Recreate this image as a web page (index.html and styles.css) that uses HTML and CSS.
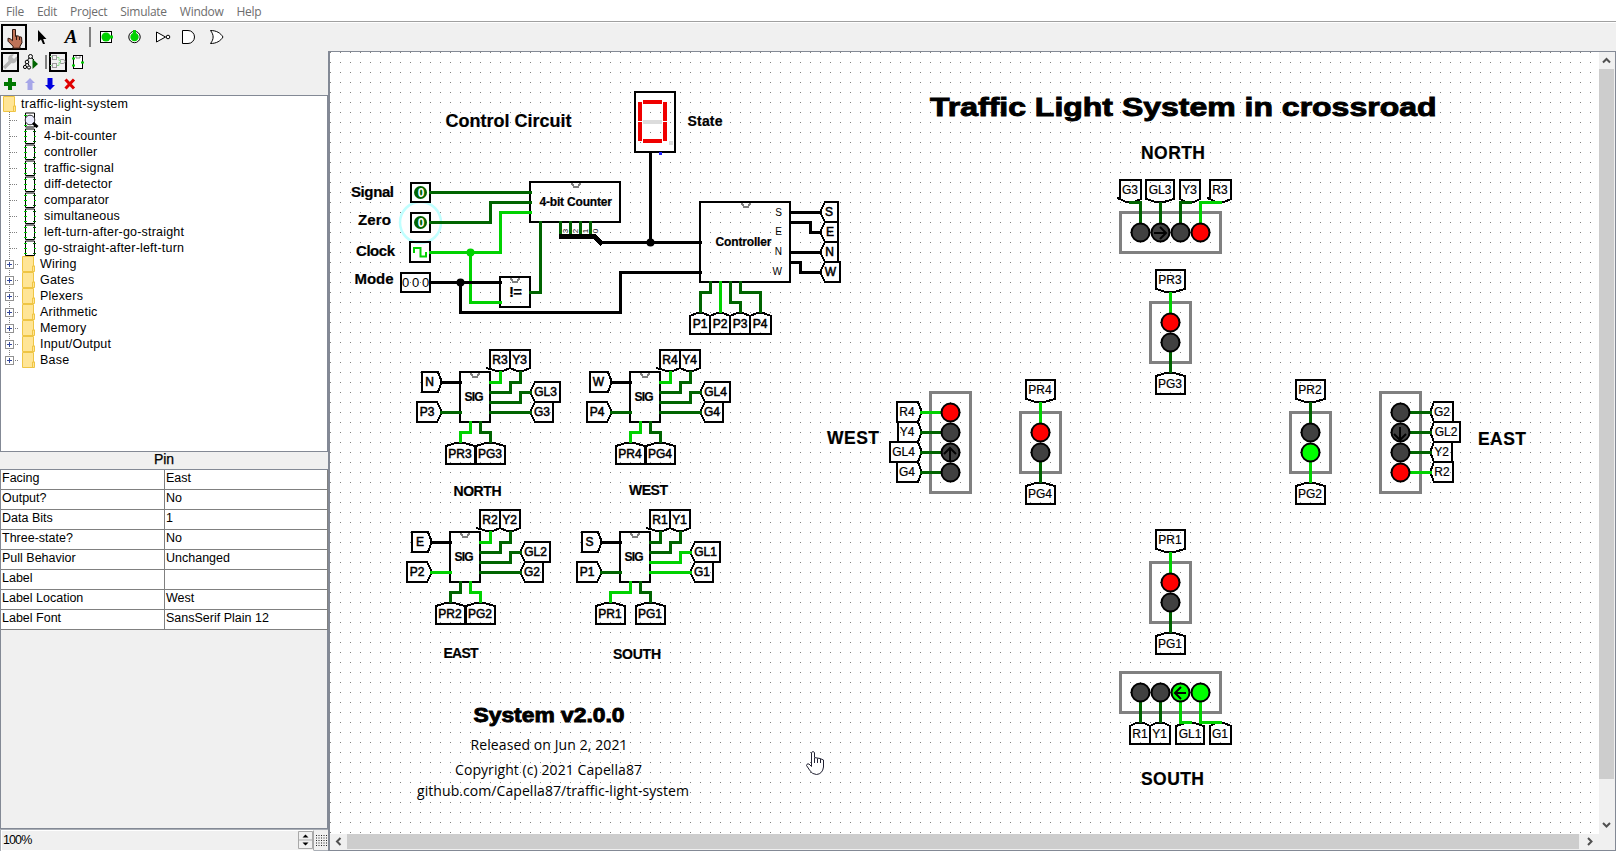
FILE: index.html
```html
<!DOCTYPE html>
<html lang="en">
<head>
<meta charset="utf-8">
<title>traffic-light-system</title>
<link rel="stylesheet" href="styles.css">
</head>
<body>
<svg class="defs" width="0" height="0" aria-hidden="true">
  <defs>
    <symbol id="branch" viewBox="0 0 18 16"><path class="dotted" d="M9.500 0V16M10 8.500H18"/></symbol>
    <symbol id="expand" viewBox="0 0 22 16"><path class="dotted" d="M9.500 0V16M15 8.500H19"/><rect x="5.500" y="4.500" width="8" height="8" fill="#fff" stroke="#919191"/><path d="M7 8.500H12M9.500 6V11" stroke="#33479b" fill="none"/></symbol>
    <symbol id="expandlast" viewBox="0 0 22 16"><path class="dotted" d="M9.500 0V5M15 8.500H19"/><rect x="5.500" y="4.500" width="8" height="8" fill="#fff" stroke="#919191"/><path d="M7 8.500H12M9.500 6V11" stroke="#33479b" fill="none"/></symbol>
    <symbol id="folder" viewBox="0 0 14 16"><path d="M.5 .5H11.500V10H12.500V15.500H.5Z" fill="#ffe596" stroke="#efc544"/><path d="M10.500 15V10H12.500" fill="none" stroke="#efc544"/></symbol>
    <symbol id="chip" viewBox="0 0 12 16"><path d="M1.500 1V15.500H10.500V1Z" fill="#fff" stroke="#000"/><path d="M0 3.500H3M0 8.500H3M0 13.500H3M10 8.500H12" stroke="#00d200"/><path d="M9 3.500H12M9 13.500H12" stroke="#006400"/></symbol>
    <symbol id="chipmain" viewBox="0 0 15 16"><path d="M1.500 1V15H10.500V1Z" fill="#fff" stroke="#000"/><path d="M0 3.500H3M0 13.500H3" stroke="#00d200"/><circle cx="6" cy="8" r="4.800" fill="#ececff" stroke="#333"/><path d="M9 11L13.500 15" stroke="#000" stroke-width="3"/></symbol>
  </defs>
</svg>
<div class="app">
  <nav class="menubar"><span>File</span><span>Edit</span><span>Project</span><span>Simulate</span><span>Window</span><span>Help</span></nav>
  <div class="toolbar">
    <span class="tool selected"><svg width="28" height="28" viewBox="0 0 28 28"><path d="M12.500 6.500h3v7l1-.8 2 .4 1 .6 2 .5.500 5.500-2 3.500v2h-7v-2l-5-5v-3l2 .5 2.500 2z" fill="#bf7358" stroke="#2e1710"/><path d="M16.500 13v4M19.500 14v3" stroke="#2e1710"/></svg></span>
    <span class="tool"><svg width="28" height="28" viewBox="0 0 28 28"><path d="M10 7V19L13 16.500L15 21H17L15.200 16H18.500Z"/></svg></span>
    <span class="tool letter">A</span>
    <i class="sep"></i>
    <span class="tool add"><svg width="27" height="28" viewBox="0 0 27 28"><rect x="7.500" y="8.500" width="11" height="11" fill="#fff" stroke="#000"/><circle cx="13" cy="14" r="4.500" fill="#00d200"/><path d="M17 14H20" stroke="#00d200" stroke-width="3"/></svg></span>
    <span class="tool add"><svg width="27" height="28" viewBox="0 0 27 28"><circle cx="13.500" cy="14" r="5.700" fill="#fff" stroke="#000"/><circle cx="13.500" cy="14" r="4.200" fill="#00d200"/><path d="M13.500 7V11" stroke="#00d200" stroke-width="3"/></svg></span>
    <span class="tool add"><svg width="27" height="28" viewBox="0 0 27 28"><path d="M8.500 9V19L17.500 14Z" fill="#fff" stroke="#000"/><circle cx="20" cy="14" r="1.800" fill="#fff" stroke="#000"/></svg></span>
    <span class="tool add"><svg width="27" height="28" viewBox="0 0 27 28"><path d="M7.500 7.500V20.500H13A6.500 6.500 0 0 0 13 7.500Z" fill="#fff" stroke="#000"/></svg></span>
    <span class="tool add"><svg width="27" height="28" viewBox="0 0 27 28"><path d="M7.500 7.500C13.500 7.500 17.500 10 20 14C17.500 18 13.500 20.500 7.500 20.500C11 16 11 12 7.500 7.500Z" fill="#fff" stroke="#000"/></svg></span>
  </div>
  <div class="workspace">
    <aside class="sidebar">
      <div class="toolbar small">
        <span class="mini selected"><svg width="16" height="18" viewBox="0 0 16 18"><path d="M2 15L10 7" stroke="#b5b5b5" stroke-width="3.500"/><path d="M14.500 3.500L12 6 10 4 12 1.500A4.500 4.500 0 1 0 14.500 3.500" fill="#b5b5b5"/></svg></span>
        <svg class="sim" width="16" height="18" viewBox="0 0 16 18"><g fill="none" stroke="#000"><circle cx="7.500" cy="3.500" r="2"/><circle cx="4" cy="9" r="1.800"/><circle cx="2" cy="14" r="1.600"/><circle cx="6" cy="14.500" r="1.600"/><path d="M6 5L4.500 7.500M9 5L11 7M3 10.500L2.500 12.500M5 10.500L6 12.500"/></g><path d="M9.500 6L15 11L9.500 16Z" fill="#006400"/></svg>
        <i class="sep"></i>
        <span class="mini selected"><svg width="16" height="18" viewBox="0 0 16 18"><g fill="none" stroke="#9a9a9a"><rect x="2.500" y="2.500" width="4" height="4"/><rect x="2.500" y="10.500" width="4" height="4"/><path d="M10.500 6.500h2.500a2 2 0 0 1 0 4h-2.500z"/></g><path d="M0 3.500h2M0 12.500h2M7 4.500h2v3h2M7 12.500h2v-3h2" fill="none" stroke="#8fdd8f"/></svg></span>
        <svg class="look" width="14" height="18" viewBox="0 0 14 18"><rect x="2.500" y="2.500" width="9" height="13" fill="#fff" stroke="#000"/><path d="M5 3v2h4v-2" fill="none" stroke="#888"/><path d="M1 5.500h3M1 12.500h3M10 9.500h3" stroke="#00d200" stroke-width="2"/></svg>
      </div>
      <div class="toolbar edit">
        <svg width="14" height="14" viewBox="0 0 14 14"><path d="M7 1V13M1 7H13" stroke="#007800" stroke-width="4"/></svg>
        <svg width="14" height="14" viewBox="0 0 14 14"><path d="M7 1L12 6H9.500V13H4.500V6H2Z" fill="#a6a6e8"/></svg>
        <svg width="14" height="14" viewBox="0 0 14 14"><path d="M7 13L12 8H9.500V1H4.500V8H2Z" fill="#0000e0"/></svg>
        <svg width="14" height="14" viewBox="0 0 14 14"><path d="M2.500 2.500L11 11.500M11 2.500L2.500 11.500" stroke="#e00000" stroke-width="3"/></svg>
      </div>
      <div class="tree">
        <div class="row root"><svg width="14" height="16"><use href="#folder"/></svg>traffic-light-system</div>
        <div class="row"><svg width="18" height="16"><use href="#branch"/></svg><svg class="ic" width="15" height="16"><use href="#chipmain"/></svg>main</div>
        <div class="row"><svg width="18" height="16"><use href="#branch"/></svg><svg class="ic" width="12" height="16"><use href="#chip"/></svg><b></b>4-bit-counter</div>
        <div class="row"><svg width="18" height="16"><use href="#branch"/></svg><svg class="ic" width="12" height="16"><use href="#chip"/></svg><b></b>controller</div>
        <div class="row"><svg width="18" height="16"><use href="#branch"/></svg><svg class="ic" width="12" height="16"><use href="#chip"/></svg><b></b>traffic-signal</div>
        <div class="row"><svg width="18" height="16"><use href="#branch"/></svg><svg class="ic" width="12" height="16"><use href="#chip"/></svg><b></b>diff-detector</div>
        <div class="row"><svg width="18" height="16"><use href="#branch"/></svg><svg class="ic" width="12" height="16"><use href="#chip"/></svg><b></b>comparator</div>
        <div class="row"><svg width="18" height="16"><use href="#branch"/></svg><svg class="ic" width="12" height="16"><use href="#chip"/></svg><b></b>simultaneous</div>
        <div class="row"><svg width="18" height="16"><use href="#branch"/></svg><svg class="ic" width="12" height="16"><use href="#chip"/></svg><b></b>left-turn-after-go-straight</div>
        <div class="row"><svg width="18" height="16"><use href="#branch"/></svg><svg class="ic" width="12" height="16"><use href="#chip"/></svg><b></b>go-straight-after-left-turn</div>
        <div class="row lib"><svg width="22" height="16"><use href="#expand"/></svg><svg width="14" height="16"><use href="#folder"/></svg>Wiring</div>
        <div class="row lib"><svg width="22" height="16"><use href="#expand"/></svg><svg width="14" height="16"><use href="#folder"/></svg>Gates</div>
        <div class="row lib"><svg width="22" height="16"><use href="#expand"/></svg><svg width="14" height="16"><use href="#folder"/></svg>Plexers</div>
        <div class="row lib"><svg width="22" height="16"><use href="#expand"/></svg><svg width="14" height="16"><use href="#folder"/></svg>Arithmetic</div>
        <div class="row lib"><svg width="22" height="16"><use href="#expand"/></svg><svg width="14" height="16"><use href="#folder"/></svg>Memory</div>
        <div class="row lib"><svg width="22" height="16"><use href="#expand"/></svg><svg width="14" height="16"><use href="#folder"/></svg>Input/Output</div>
        <div class="row lib"><svg width="22" height="16"><use href="#expandlast"/></svg><svg width="14" height="16"><use href="#folder"/></svg>Base</div>
      </div>
      <div class="attr-title">Pin</div>
      <div class="attrs">
        <div class="attr"><span>Facing</span><span>East</span></div>
        <div class="attr"><span>Output?</span><span>No</span></div>
        <div class="attr"><span>Data Bits</span><span>1</span></div>
        <div class="attr"><span>Three-state?</span><span>No</span></div>
        <div class="attr"><span>Pull Behavior</span><span>Unchanged</span></div>
        <div class="attr"><span>Label</span><span></span></div>
        <div class="attr"><span>Label Location</span><span>West</span></div>
        <div class="attr"><span>Label Font</span><span>SansSerif Plain 12</span></div>
      </div>
      <div class="zoom">
        <div class="zoomfield"><span>100%</span>
          <svg width="15" height="18" viewBox="0 0 15 18"><path d="M.5 .5H14.500V17.500H.5ZM.5 9H14.500" fill="none" stroke="#a9a9a9"/><path d="M7.500 3.500L10.500 6.500H4.500ZM7.500 14.500L10.500 11.500H4.500Z"/></svg>
        </div>
        <svg class="grip" width="11" height="11" viewBox="0 0 11 11"><g stroke="#222" stroke-dasharray="1 1.500"><path d="M0 .5H11M0 3H11M0 5.500H11M0 8H11M0 10.500H11"/></g></svg>
      </div>
    </aside>
    <main class="canvas">
      <svg class="circuit" width="1269" height="782" viewBox="330 52 1269 782">
        <defs>
          <pattern id="dots" width="10" height="10" patternUnits="userSpaceOnUse"><rect x="0" y="2" width="1" height="1" fill="#808080"/></pattern>
          <path id="notch" class="notch" d="M-4.500 0L-1.800 4H1.800L4.500 0"/>
          <g id="sig">
            <use href="#notch" x="475" y="373"/>
            <path class="box" d="M460 372H490V422H460Z"/>
            <path class="box" d="M417 402H437L441 410V414L437 422H417Z"/>
            <path class="box" d="M486 368L490 369V350H510V368L503 371H497L490 369M510 350H530V368L523 371H517L510 368"/>
            <path class="box" d="M560 382V402H535L531 394V390L535 382ZM535 402L531 410V414L535 422H553V402"/>
            <path class="box" d="M476 464H505V446L494 443H486L476 446Z"/>
            <text class="bold" x="464.500" y="401" font-size="12" textLength="19">SIG</text>
          </g>
          <path id="prbox" class="box" d="M446 464H475V446L464 443H456L446 446Z"/>
          <path id="tin" class="box" d="M422 372H438L441 380V384L438 392H422Z"/>
          <g id="ped">
            <rect class="frame" x="1150.500" y="302.500" width="40" height="60"/>
            <path class="box" d="M1156 270H1185V289L1174 292H1166L1156 289ZM1156 394H1185V376L1174 373H1166L1156 376Z"/>
          </g>
        </defs>
        <rect x="330" y="52" width="1269" height="782" fill="#fff"/>
        <rect x="330" y="52" width="1269" height="782" fill="url(#dots)"/>

        <!-- control circuit -->
        <circle cx="420.500" cy="222.500" r="20.500" fill="none" stroke="#c0ffff" stroke-width="2.500"/>
        <g class="crisp">
          <use href="#notch" x="576" y="183"/><use href="#notch" x="515" y="278"/><use href="#notch" x="746" y="203"/>
          <path class="box" d="M411 183H430V202H411ZM411 213H430V232H411ZM410 242H430V262H410ZM401 273H430V292H401ZM530 182H620V222H530ZM500 277H530V307H500ZM700 202H790V282H700ZM635 92H675V152H635Z"/>
          <path d="M643 100H662V104H643ZM643 139H662V143H643ZM638 102H642V121H638ZM638 122H642V141H638ZM663 102H667V121H663ZM663 122H667V141H663Z" fill="#f00000"/>
          <path d="M643 120H662V124H643ZM669 141H673V145H669Z" fill="#dcdcdc"/>
          <path class="box" d="M825 202H838V222H825L821 214V210ZM825 222L821 230V234L825 242H838V222M825 242L821 250V254L825 262H838V242M825 262H840V282H825L821 274V270Z"/>
          <path class="box" d="M690 334H710V316L703 313H697L690 316ZM710 334H730V316L723 313H717L710 316ZM730 334H750V316L743 313H737L730 316ZM750 334H771V316L763 313H757L750 316Z"/>
        </g>
        <g class="wires">
          <path class="lo" d="M430 192H530M430 222H490V202H530M530 292H540V222M560 222V234M570 222V234M580 222V234M590 222V234M710 282V292H700V311M730 282V302H740V311M740 282V292H760V311"/>
          <path class="hi" d="M430 252H500V212H530M470 252V302H500M720 282V311"/>
          <path class="bus" d="M430 282H500M460 282V312H620V272H700M600 242H700M650 152V242M790 212H820M790 222H810V232H820M790 252H820M790 262H800V272H820"/>
          <path class="bus thick" d="M561 236H594L600 242"/>
          <path class="blue" d="M660 152.500H660.100"/>
        </g>
        <circle cx="470.500" cy="252.500" r="4" fill="#00d200"/><circle cx="460.500" cy="282.500" r="4"/><circle cx="650.500" cy="242.500" r="4"/>
        <circle cx="420.500" cy="192.500" r="6.500" fill="#006400"/><circle cx="420.500" cy="222.500" r="6.500" fill="#006400"/>
        <g class="zero"><text x="421" y="197">0</text><text x="421" y="227">0</text></g>
        <path d="M414 253V248H420.500V256.500H426V252" fill="none" stroke="#00d200" stroke-width="2"/>
        <g class="tag thin" font-size="14"><text x="405.500" y="287">0</text><text x="415.500" y="287">0</text><text x="425.500" y="287">0</text></g>
        <g class="tag thin tiny"><text transform="translate(568 231) rotate(-90)">3</text><text transform="translate(578 231) rotate(-90)">2</text><text transform="translate(588 231) rotate(-90)">1</text><text transform="translate(598 231) rotate(-90)">0</text></g>
        <g class="bold">
          <text x="445.500" y="127" font-size="18" textLength="126">Control Circuit</text>
          <text x="687.500" y="126" font-size="14" textLength="35">State</text>
          <text x="351" y="197" font-size="15" textLength="43">Signal</text>
          <text x="358" y="225" font-size="15" textLength="33">Zero</text>
          <text x="356" y="256" font-size="15" textLength="39">Clock</text>
          <text x="354.500" y="284" font-size="15" textLength="39">Mode</text>
          <text x="539.500" y="206" font-size="12" textLength="72.500">4-bit Counter</text>
          <text x="509" y="297" font-size="15" textLength="13">!=</text>
          <text x="715.500" y="246" font-size="12" textLength="56">Controller</text>
        </g>
        <g class="tag end"><text x="782" y="216">S</text><text x="782" y="235">E</text><text x="782" y="255">N</text><text x="782" y="275">W</text></g>
        <g class="tag heavy"><text x="829" y="216">S</text><text x="830" y="236">E</text><text x="829.500" y="256">N</text><text x="830.500" y="276">W</text>
        <text x="700" y="328">P1</text><text x="720" y="328">P2</text><text x="740" y="328">P3</text><text x="760" y="328">P4</text></g>

        <!-- signal decoders -->
        <g class="crisp">
          <use href="#sig"/><use href="#prbox"/><use href="#tin"/>
          <use href="#sig" x="170"/><use href="#prbox" x="170"/><path class="box" d="M590 372H608L611 380V384L608 392H590Z"/>
          <use href="#sig" x="-10" y="160"/><use href="#prbox" x="-10" y="160"/><use href="#tin" x="-10" y="160"/>
          <use href="#sig" x="160" y="160"/><use href="#prbox" x="150" y="160"/><use href="#tin" x="160" y="160"/>
        </g>
        <g class="wires">
          <path class="bus" d="M441 382H460M612 382H630M431 542H450M601 542H620"/>
          <path class="lo" d="M441 412H460M490 392H510V382H520V372M490 402H520V392H530M490 412H530M480 422V432H490V441"/>
          <path class="hi" d="M490 382H500V372M470 422V432H460V441"/>
          <path class="lo" d="M611 412H630M660 392H680V382H690V372M660 402H690V392H700M660 412H700M650 422V432H660V441"/>
          <path class="hi" d="M660 382H670V372M640 422V432H630V441"/>
          <path class="lo" d="M480 552H500V542H510V532M480 562H510V552H520M480 572H520M460 582V592H450V601"/>
          <path class="hi" d="M431 572H450M480 542H490V532M470 582V592H480V601"/>
          <path class="lo" d="M601 572H620M650 542H660V532M650 552H670V542H680V532M640 582V592H650V601"/>
          <path class="hi" d="M650 562H680V552H690M650 572H690M630 582V592H610V601"/>
        </g>
        <g class="tag heavy">
          <text x="429.500" y="386">N</text><text x="427" y="416">P3</text><text x="500" y="364">R3</text><text x="519.500" y="364">Y3</text><text x="545.500" y="396">GL3</text><text x="542" y="416">G3</text><text x="460" y="458">PR3</text><text x="490" y="458">PG3</text>
          <text x="598.500" y="386">W</text><text x="597" y="416">P4</text><text x="670" y="364">R4</text><text x="689.500" y="364">Y4</text><text x="715.500" y="396">GL4</text><text x="712" y="416">G4</text><text x="630" y="458">PR4</text><text x="660" y="458">PG4</text>
          <text x="420" y="546">E</text><text x="417" y="576">P2</text><text x="490" y="524">R2</text><text x="509.500" y="524">Y2</text><text x="535.500" y="556">GL2</text><text x="532" y="576">G2</text><text x="450" y="618">PR2</text><text x="480" y="618">PG2</text>
          <text x="589.500" y="546">S</text><text x="587" y="576">P1</text><text x="660" y="524">R1</text><text x="679.500" y="524">Y1</text><text x="705.500" y="556">GL1</text><text x="702" y="576">G1</text><text x="610" y="618">PR1</text><text x="650" y="618">PG1</text>
        </g>
        <g class="bold" font-size="14">
          <text x="453.500" y="496" textLength="48">NORTH</text><text x="629" y="495" textLength="39">WEST</text><text x="443.500" y="658" textLength="35">EAST</text><text x="613" y="659" textLength="48">SOUTH</text>
        </g>

        <!-- version notes -->
        <text class="black" x="473.500" y="721.500" font-size="20" textLength="151" lengthAdjust="spacingAndGlyphs">System v2.0.0</text>
        <g class="notes">
          <text x="470.500" y="750" textLength="157">Released on Jun 2, 2021</text>
          <text x="455" y="775" textLength="187">Copyright (c) 2021 Capella87</text>
          <text x="417" y="796" textLength="272">github.com/Capella87/traffic-light-system</text>
        </g>

        <!-- crossroad -->
        <g class="crisp">
          <rect class="frame" x="1120.500" y="212.500" width="100" height="40"/>
          <rect class="frame" x="1120.500" y="672.500" width="100" height="40"/>
          <rect class="frame" x="930.500" y="392.500" width="40" height="100"/>
          <rect class="frame" x="1380.500" y="392.500" width="40" height="100"/>
          <use href="#ped"/><use href="#ped" x="-130" y="110"/><use href="#ped" x="140" y="110"/><use href="#ped" y="260"/>
          <path class="box" d="M1117 198L1120 199V180H1141V199L1134 202H1126L1120 199M1146 180H1174V199L1164 202H1156L1146 199ZM1180 180H1200V199L1194 202H1186L1180 199ZM1207 198L1210 199V180H1231V199L1224 202H1216L1210 199"/>
          <path class="box" d="M1130 744H1150V726L1144 723H1136L1130 726ZM1151 744H1170V726L1164 723H1156L1150 726M1176 744H1204V726L1194 723H1186L1176 726ZM1210 744H1231V726L1224 723H1216L1210 726Z"/>
          <path class="box" d="M897 402H918L921 410V414L918 422H897ZM898 422V442M918 422L921 430V434L918 442M890 442H918L921 450V454L918 462H890ZM897 462V482H918L921 474V470L918 462"/>
          <path class="box" d="M1453 402H1434L1431 410V414L1434 422H1453ZM1434 422H1460V442H1434L1431 434V430ZM1452 442V462M1434 442L1431 450V454L1434 462H1453V482H1434L1431 474V470L1434 462"/>
        </g>
        <g class="wires">
          <path class="lo" d="M1130 202H1140V222M1160 203V222M1190 202H1180V222M1170 352V371M921 432H940M921 452H940M921 472H940M1040 462V481M1310 403V422M1410 412H1430M1410 432H1430M1410 452H1430M1170 612V631M1140 702V721M1160 702V721"/>
          <path class="hi" d="M1220 202H1200V222M1170 293V312M921 412H940M1040 403V422M1310 462V481M1410 472H1430M1170 553V572M1180 702V722H1190M1200 702V722H1220"/>
        </g>
        <g class="led">
          <circle cx="1140.500" cy="232.500" r="9"/><circle cx="1160.500" cy="232.500" r="9"/><circle cx="1180.500" cy="232.500" r="9"/><circle class="red" cx="1200.500" cy="232.500" r="9"/>
          <circle class="red" cx="1170.500" cy="322.500" r="9"/><circle cx="1170.500" cy="342.500" r="9"/>
          <circle class="red" cx="950.500" cy="412.500" r="9"/><circle cx="950.500" cy="432.500" r="9"/><circle cx="950.500" cy="452.500" r="9"/><circle cx="950.500" cy="472.500" r="9"/>
          <circle class="red" cx="1040.500" cy="432.500" r="9"/><circle cx="1040.500" cy="452.500" r="9"/>
          <circle cx="1310.500" cy="432.500" r="9"/><circle class="green" cx="1310.500" cy="452.500" r="9"/>
          <circle cx="1400.500" cy="412.500" r="9"/><circle cx="1400.500" cy="432.500" r="9"/><circle cx="1400.500" cy="452.500" r="9"/><circle class="red" cx="1400.500" cy="472.500" r="9"/>
          <circle class="red" cx="1170.500" cy="582.500" r="9"/><circle cx="1170.500" cy="602.500" r="9"/>
          <circle cx="1140.500" cy="692.500" r="9"/><circle cx="1160.500" cy="692.500" r="9"/><circle class="green" cx="1180.500" cy="692.500" r="9"/><circle class="green" cx="1200.500" cy="692.500" r="9"/>
          <path class="arrow" d="M1154 233H1166M1160 227L1166 233L1160 239M950 462V448M944 454L950 448L956 454M1400 427V440M1394 434L1400 440L1406 434M1186 693H1175M1181 687L1175 693L1181 699"/>
        </g>
        <g class="tag">
          <text x="1130" y="194">G3</text><text x="1160" y="194">GL3</text><text x="1189.500" y="194">Y3</text><text x="1220" y="194">R3</text>
          <text x="1170" y="284">PR3</text><text x="1170" y="388">PG3</text><text x="1040" y="394">PR4</text><text x="1040" y="498">PG4</text>
          <text x="1310" y="394">PR2</text><text x="1310" y="498">PG2</text><text x="1170" y="544">PR1</text><text x="1170" y="648">PG1</text>
          <text x="907" y="416">R4</text><text x="907" y="436">Y4</text><text x="903.500" y="456">GL4</text><text x="907" y="476">G4</text>
          <text x="1442" y="416">G2</text><text x="1446" y="436">GL2</text><text x="1441.500" y="456">Y2</text><text x="1442" y="476">R2</text>
          <text x="1140" y="738">R1</text><text x="1159.500" y="738">Y1</text><text x="1190" y="738">GL1</text><text x="1220" y="738">G1</text>
        </g>
        <text class="black" x="930" y="116" font-size="26" textLength="506.500" lengthAdjust="spacingAndGlyphs">Traffic Light System in crossroad</text>
        <g class="bold" font-size="17.500">
          <text x="1141" y="158.500" textLength="64">NORTH</text><text x="827" y="444" textLength="52">WEST</text><text x="1478" y="444.500" textLength="48">EAST</text><text x="1141" y="785" textLength="63">SOUTH</text>
        </g>

        <!-- hand pointer -->
        <path d="M811.500 764V752.500Q813 750.500 814.500 752.500V757.500L817 758L820 758.500L823.500 760V767Q822.500 774 816.500 774.500Q812 774.500 809.500 770L806.500 765.500Q807 763 809 764L811.500 766.500Z" fill="#fff" stroke="#223"/><path d="M814.500 758V763M817.500 758.500V763M820.500 759V763" stroke="#223"/>
      </svg>
      <div class="vbar"><svg width="15" height="17" viewBox="0 0 15 17"><path d="M4 10.500L7.500 7L11 10.500"/></svg><div class="vthumb"></div><svg width="15" height="17" viewBox="0 0 15 17"><path d="M4 6L7.500 9.500L11 6"/></svg></div>
      <div class="hbar"><svg width="17" height="15" viewBox="0 0 17 15"><path d="M10.500 4L7 7.500L10.500 11"/></svg><div class="hthumb"></div><svg width="20" height="15" viewBox="0 0 20 15"><path d="M9 4L12.500 7.500L9 11"/></svg></div>
      <div class="corner"></div>
    </main>
  </div>
</div>
</body>
</html>
```
FILE: styles.css
```css
* { box-sizing: border-box; }
body { margin: 0; overflow: hidden; background: #f0f0f0; font-family: "Liberation Sans", Arial, sans-serif; }
svg { display: block; flex: none; }
.defs { position: absolute; }
.dotted { fill: none; stroke: #808080; stroke-dasharray: 1 1; }
.app { display: flex; flex-direction: column; width: 1616px; height: 851px; }
.menubar { display: flex; gap: 13px; height: 22px; padding: 2px 6px 0; background: #fff; border-bottom: 1px solid #a0a0a0; color: #6d6d6d; font: 12px/19px "Open Sans", "Noto Sans", sans-serif; letter-spacing: -.28px; }
.toolbar { display: flex; align-items: center; height: 29px; border-top: 1px solid #fff; }
.tool { display: flex; align-items: center; justify-content: center; width: 28px; height: 28px; flex: none; }
.tool.add { width: 27.4px; }
.tool.selected { width: 26px; height: 26px; margin: 1px; border: 2px solid #000; }
.letter { font: italic bold 19px/28px "Liberation Serif", serif; padding-left: 2px; }
.sep { width: 2px; height: 20px; margin: 0 2px 0 5px; background: #808080; }
.workspace { display: flex; flex: 1; min-height: 0; }
.sidebar { display: flex; flex-direction: column; width: 329px; height: 800px; border-right: 1px solid #838995; }
.small { height: 22px; border: 0; padding-left: 1px; }
.mini.selected { display: flex; align-items: center; justify-content: center; width: 18px; height: 20px; border: 2px solid #000; }
.mini svg { margin: -2px; }
.small .sim { margin-left: 4px; }
.small .sep { height: 14px; margin: 0 2px 0 6px; }
.small .look { margin-left: 4px; }
.edit { height: 22px; border: 0; padding-left: 3px; gap: 6px; }
.tree { height: 357px; border: 1px solid #838995; background: #fff; }
.row { display: flex; height: 16px; font-size: 12.5px; line-height: 17px; letter-spacing: .2px; white-space: pre; }
.row.root { padding-left: 2px; gap: 4px; letter-spacing: .3px; }
.row > svg:first-child { margin-left: -1px; }
.row.root > svg:first-child { margin-left: 0; }
.ic { margin-left: 6px; margin-right: 5px; }
.row b { width: 3px; }
.row.lib > svg:nth-child(2) { margin-right: 4px; }
.attr-title { height: 17px; text-align: center; font-size: 14px; line-height: 15px; -webkit-text-stroke: .25px #000; }
.attrs { height: 360px; border: 1px solid #838995; }
.attr { display: grid; grid-template-columns: 164px 163px; height: 20px; width: 327px; font-size: 12.5px; line-height: 17px; background: #fff; border-bottom: 1px solid #808080; }
.attr span { padding-left: 1px; border-right: 1px solid #808080; }
.zoom { display: flex; align-items: center; height: 22px; border: 1px solid #a9aeb6; border-right: 0; }
.zoomfield { display: flex; align-items: center; justify-content: space-between; width: 313px; height: 21px; padding: 0 0 1px 1px; border: 1px solid #fff; border-right: 1px solid #a9a9a9; font-size: 12.5px; letter-spacing: -.9px; }
.grip { margin-left: 2px; }
.canvas { display: grid; grid-template-columns: 1269px 15px; grid-template-rows: 782px 15px; width: 1287px; height: 800px; border: 1px solid #838995; background: #f0f0f0; }
.circuit { font-family: "Liberation Sans", Arial, sans-serif; }
.crisp, .wires { shape-rendering: crispEdges; }
.box { fill: none; stroke: #000; stroke-width: 2; }
.notch { fill: none; stroke: #808080; stroke-width: 2; }
.frame { fill: none; stroke: #808080; stroke-width: 3; }
.wires { fill: none; stroke-width: 3; stroke-linecap: square; transform: translate(.5px, .5px); }
.lo { stroke: #006400; }
.hi { stroke: #00d200; }
.bus { stroke: #000; }
.thick { stroke-width: 5; }
.blue { stroke: #2020ff; }
.bold { font-weight: bold; stroke: #000; stroke-width: .2px; }
.black { font-weight: bold; stroke: #000; stroke-width: .9px; }
.tag { font-size: 12px; text-anchor: middle; stroke: #000; stroke-width: .2px; }
.tag.heavy { stroke-width: .5px; }
.tag.thin { stroke: none; }
.tag.thin[font-size] { font-size: 13px; }
.tag.tiny { font-size: 8px; }
.tag.end { font-size: 10px; text-anchor: end; stroke: none; }
.zero { font-size: 12px; font-weight: bold; text-anchor: middle; fill: #fff; }
.notes { font-family: "Open Sans", "Noto Sans", sans-serif; font-size: 14px; }
.led circle { fill: #404040; stroke: #000; stroke-width: 2; }
.led .red { fill: #f00; }
.led .green { fill: #0f0; }
.arrow { fill: none; stroke: #000; stroke-width: 2; }
.vbar { display: flex; flex-direction: column; background: #f0f0f0; }
.vthumb { height: 710px; background: #cdcdcd; }
.vbar svg:last-child { margin-top: 38px; }
.hbar { display: flex; background: #f0f0f0; }
.hthumb { width: 1232px; background: #cdcdcd; }
.vbar path, .hbar path { fill: none; stroke: #505050; stroke-width: 2; }
```
